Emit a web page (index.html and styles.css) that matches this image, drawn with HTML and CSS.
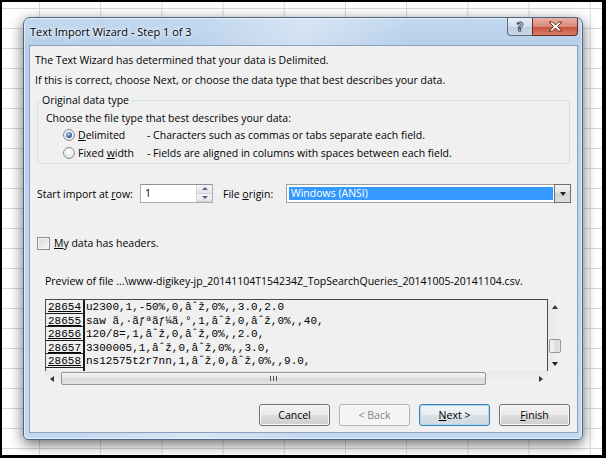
FILE: index.html
```html
<!DOCTYPE html>
<html lang="en">
<head>
    <meta charset="UTF-8">
    <title>Text Import Wizard - Step 1 of 3</title>
    <link rel="stylesheet" href="styles.css">
</head>
<body>
    <div class="screen">
        <div class="window">
            <div class="titlebar">
                <span class="title">Text Import Wizard - Step 1 of 3</span>
                <div class="caption">
                    <span class="cap help"><span class="qmark">?</span></span>
                    <span class="cap close">
                        <svg width="15" height="11" viewBox="0 0 15 11"><path d="M1 1 L4.5 1 L7.5 4 L10.5 1 L14 1 L9.5 5.5 L14 10 L10.5 10 L7.5 7 L4.5 10 L1 10 L5.5 5.5 Z" fill="#fff" stroke="#5a1e16" stroke-width="0.9" stroke-linejoin="round"/></svg>
                    </span>
                </div>
            </div>

            <div class="client">
                <p class="intro">The Text Wizard has determined that your data is Delimited.</p>
                <p class="intro">If this is correct, choose Next, or choose the data type that best describes your data.</p>

                <fieldset class="group">
                    <legend>Original data type</legend>
                    <p class="choose">Choose the file type that best describes your data:</p>
                    <div class="radio-row">
                        <span class="radio checked"></span>
                        <span class="rlabel"><u>D</u>elimited</span>
                        <span>- Characters such as commas or tabs separate each field.</span>
                    </div>
                    <div class="radio-row">
                        <span class="radio"></span>
                        <span class="rlabel">Fixed <u>w</u>idth</span>
                        <span>- Fields are aligned in columns with spaces between each field.</span>
                    </div>
                </fieldset>

                <div class="import-row">
                    <span class="row-label">Start import at <u>r</u>ow:</span>
                    <div class="spin">
                        <span class="spin-value">1</span>
                        <div class="spin-btns">
                            <span class="spin-btn"><i class="tri up"></i></span>
                            <span class="spin-btn"><i class="tri down"></i></span>
                        </div>
                    </div>
                    <span class="origin-label">File <u>o</u>rigin:</span>
                    <div class="combo">
                        <span class="combo-sel">Windows (ANSI)</span>
                        <span class="combo-drop"><i class="tri down dark"></i></span>
                    </div>
                </div>

                <div class="check-row">
                    <span class="checkbox"></span>
                    <span><u>M</u>y data has headers.</span>
                </div>

                <p class="preview-label">Preview of file ...\www-digikey-jp_20141104T154234Z_TopSearchQueries_20141005-20141104.csv.</p>

                <div class="preview">
                    <div class="list">
                        <div class="row"><span class="num">28654</span><span class="data">u2300,1,-50%,0,âˆž,0%,,3.0,2.0</span></div>
                        <div class="row"><span class="num">28655</span><span class="data">saw ã‚·ãƒªãƒ¼ã‚°,1,âˆž,0,âˆž,0%,,40,</span></div>
                        <div class="row"><span class="num">28656</span><span class="data">120/8=,1,âˆž,0,âˆž,0%,,2.0,</span></div>
                        <div class="row"><span class="num">28657</span><span class="data">3300005,1,âˆž,0,âˆž,0%,,3.0,</span></div>
                        <div class="row"><span class="num">28658</span><span class="data">ns12575t2r7nn,1,âˆž,0,âˆž,0%,,9.0,</span></div>
                        <div class="row"><span class="num"></span><span class="data"></span></div>
                    </div>
                    <div class="vscroll">
                        <span class="sarrow"><i class="tri up dark"></i></span>
                        <span class="vthumb"></span>
                        <span class="sarrow last"><i class="tri down dark"></i></span>
                    </div>
                    <div class="hscroll">
                        <span class="sarrow"><i class="tri left dark"></i></span>
                        <span class="hthumb"><span class="grip"></span></span>
                        <span class="sarrow"><i class="tri right dark"></i></span>
                    </div>
                    <div class="corner"></div>
                </div>

                <div class="buttons">
                    <button class="btn">Cancel</button>
                    <button class="btn disabled">&lt; Back</button>
                    <button class="btn default"><u>N</u>ext &gt;</button>
                    <button class="btn"><u>F</u>inish</button>
                </div>
            </div>
        </div>
    </div>
</body>
</html>
```

FILE: styles.css
```css
body {
    margin: 0;
    background: #000;
    font-family: "Open Sans", "Noto Sans", sans-serif;
    font-size: 10.5px;
    color: #000;
}
.screen {
    position: relative;
    width: 600px;
    height: 453px;
    margin: 2px 4px 3px 2px;
    overflow: hidden;
    background-color: #fff;
    background-image:
        linear-gradient(to right, #d8d8d8 1px, transparent 1px),
        linear-gradient(to bottom, #d8d8d8 1px, transparent 1px);
    background-size: 61.2px 100%, 100% 20px;
    background-position: 37px 0, 0 6px;
}

/* dialog window */
.window {
    position: absolute;
    left: 21px;
    top: 15px;
    width: 558px;
    height: 421px;
    border: 1px solid #4d6684;
    border-radius: 7px 7px 5px 5px;
    background:
        linear-gradient(105deg, rgba(255,255,255,0) 25%, rgba(255,255,255,.35) 42%, rgba(255,255,255,0) 58%),
        linear-gradient(#c3d8ef, #b7cfea 28px, #c4d9ef);
    box-shadow: inset 0 0 0 1px rgba(255,255,255,.55), 0 4px 14px rgba(0,0,0,.6);
    display: flex;
    flex-direction: column;
}
.titlebar {
    height: 27px;
    display: flex;
    align-items: flex-start;
}
.title {
    padding: 6px 0 0 6px;
    line-height: 16px;
    font-size: 11px;
    text-shadow: 0 0 6px #fff, 0 0 3px #fff;
}
.caption {
    margin-left: auto;
    margin-right: 4px;
    display: flex;
}
.cap {
    height: 18px;
    box-sizing: border-box;
    border: 1px solid #5b6c84;
    border-top: none;
    display: flex;
    align-items: center;
    justify-content: center;
}
.help {
    width: 25px;
    border-right: none;
    border-radius: 0 0 0 4px;
    background: linear-gradient(#e6eef8, #d2deec 50%, #bccbde 50%, #cad8e9);
}
.qmark {
    font-family: "DejaVu Sans", sans-serif;
    font-weight: bold;
    font-size: 12px;
    line-height: 12px;
    color: #fff;
    -webkit-text-stroke: 1px #3d4c60;
}
.close {
    width: 46px;
    border-color: #6b2a22;
    border-radius: 0 0 4px 0;
    background: linear-gradient(#eab0a2, #d98a79 50%, #c64c38 50%, #d8806a);
}

.client {
    flex: 1;
    margin: 0 4px 6px 5px;
    border: 1px solid #8aa2bf;
    background: #f0f0f0;
    padding-top: 4px;
    display: flex;
    flex-direction: column;
}
.intro {
    margin: 0;
    padding-left: 5px;
    line-height: 20px;
}

/* group box */
.group {
    margin: 2px 7px 0;
    padding: 3px 8px 1px;
    border: 1px solid #d5dfe5;
    border-radius: 3px;
    min-width: 0;
}
.group legend {
    margin-left: -6px;
    padding: 0 2px;
    line-height: 16px;
}
.choose {
    margin: 0;
    line-height: 15px;
}
.radio-row {
    display: flex;
    align-items: center;
    height: 18px;
    padding-left: 17px;
}
.radio {
    width: 12px;
    height: 12px;
    box-sizing: border-box;
    border: 1px solid #8b8b8b;
    border-radius: 50%;
    background: radial-gradient(circle at 50% 35%, #fff, #dcdcdc);
    margin-right: 3px;
    display: flex;
    align-items: center;
    justify-content: center;
}
.radio.checked::after {
    content: "";
    width: 6px;
    height: 6px;
    border-radius: 50%;
    background: radial-gradient(circle at 40% 35%, #b6d8f5, #3a6ea5 55%, #132f52);
}
.rlabel {
    width: 69px;
}

/* import row */
.import-row {
    display: flex;
    align-items: center;
    margin-top: 20px;
    padding-left: 7px;
    height: 19px;
}
.row-label {
    width: 103px;
}
.spin {
    width: 73px;
    height: 19px;
    box-sizing: border-box;
    border: 1px solid #abadb3;
    border-top-color: #8e9199;
    background: #fff;
    display: flex;
}
.spin-value {
    flex: 1;
    padding-left: 4px;
    line-height: 17px;
}
.spin-btns {
    width: 15px;
    display: flex;
    flex-direction: column;
    border-left: 1px solid #d6d6d6;
}
.spin-btn {
    flex: 1;
    display: flex;
    align-items: center;
    justify-content: center;
    background: linear-gradient(#f6f6f6, #e4e4e4);
    border-bottom: 1px solid #d0d0d0;
}
.origin-label {
    margin-left: 10px;
    width: 63px;
}
.combo {
    width: 285px;
    height: 19px;
    box-sizing: border-box;
    border: 1px solid #a0a0a0;
    background: #fff;
    display: flex;
}
.combo-sel {
    flex: 1;
    margin: 2px 1px 2px 2px;
    padding-left: 2px;
    background: #3399ff;
    color: #fff;
    line-height: 13px;
}
.combo-drop {
    width: 15px;
    margin: -1px -1px -1px 0;
    border: 1px solid #6f6f6f;
    background: linear-gradient(#f4f4f4, #e2e2e2 50%, #d4d4d4 50%, #dcdcdc);
    display: flex;
    align-items: center;
    justify-content: center;
}

/* small triangles */
.tri {
    width: 0;
    height: 0;
    border: 3px solid transparent;
}
.tri.up { border-bottom: 3px solid #4f6685; border-top: none; }
.tri.down { border-top: 3px solid #4f6685; border-bottom: none; }
.tri.left { border-right: 3px solid #4f6685; border-left: none; }
.tri.right { border-left: 3px solid #4f6685; border-right: none; }
.tri.dark.up { border-bottom-color: #333; border-width: 0 3.5px 4px; }
.tri.dark.down { border-top-color: #222; border-width: 4px 3.5px 0; }
.tri.dark.left { border-right-color: #333; border-width: 3.5px 4px 3.5px 0; }
.tri.dark.right { border-left-color: #333; border-width: 3.5px 0 3.5px 4px; }

/* checkbox */
.check-row {
    display: flex;
    align-items: center;
    margin-top: 32px;
    padding-left: 7px;
    height: 16px;
}
.checkbox {
    width: 13px;
    height: 13px;
    box-sizing: border-box;
    border: 1px solid #8e8f8f;
    background: linear-gradient(135deg, #d4d4d4, #f7f7f7);
    box-shadow: inset 0 0 0 1px #f4f4f4;
    margin-right: 4px;
}

.preview-label {
    margin: 22px 0 0;
    padding-left: 15px;
    line-height: 16px;
}

/* preview */
.preview {
    margin: 10px 0 0 15px;
    width: 517px;
    display: grid;
    grid-template-columns: 503px 14px;
    grid-template-rows: 72px 15px;
}
.list {
    border: 1px solid #4a4a4a;
    border-bottom: none;
    background: #f0f0f0;
    overflow: hidden;
    font-family: "Liberation Mono", monospace;
    font-size: 11px;
}
.row {
    display: flex;
    height: 13.6px;
    line-height: 15px;
}
.num {
    width: 39px;
    flex: none;
    box-sizing: border-box;
    padding-left: 2px;
    border-right: 2px solid #1a1a1a;
    border-bottom: 1px solid #1a1a1a;
    text-decoration: underline;
    overflow: hidden;
}
.data {
    padding-left: 1px;
    white-space: pre;
}
.vscroll {
    background: linear-gradient(to right, #e9e9e9, #f2f2f2);
    display: flex;
    flex-direction: column;
    align-items: center;
}
.sarrow {
    width: 14px;
    height: 15px;
    flex: none;
    display: flex;
    align-items: center;
    justify-content: center;
}
.vscroll .sarrow.last {
    margin-top: auto;
}
.vthumb {
    width: 12px;
    height: 14px;
    margin-top: 25px;
    box-sizing: border-box;
    border: 1px solid #979797;
    border-radius: 2px;
    background: linear-gradient(to right, #f4f4f4, #e6e6e6 50%, #d9d9d9 50%, #e4e4e4);
}
.hscroll {
    background: linear-gradient(#e9e9e9, #f2f2f2);
    display: flex;
    align-items: center;
}
.hthumb {
    width: 425px;
    height: 13px;
    margin: 0 auto 0 2px;
    box-sizing: border-box;
    border: 1px solid #979797;
    border-radius: 2px;
    background: linear-gradient(#f4f4f4, #e6e6e6 50%, #d9d9d9 50%, #e4e4e4);
    display: flex;
    align-items: center;
    justify-content: center;
}
.grip {
    width: 5px;
    height: 5px;
    border-left: 1px solid #555;
    border-right: 1px solid #555;
}
.grip::after {
    content: "";
    display: block;
    width: 1px;
    height: 5px;
    margin-left: 2px;
    background: #555;
}
.corner {
    background: #f0f0f0;
}

/* buttons */
.buttons {
    display: flex;
    justify-content: flex-end;
    gap: 9px;
    margin-top: 18px;
    padding-right: 7px;
}
.btn {
    width: 71px;
    height: 22px;
    border: 1px solid #707070;
    border-radius: 3px;
    background: linear-gradient(#f2f2f2, #ebebeb 50%, #dddddd 50%, #cfcfcf);
    box-shadow: inset 0 0 0 1px #fafafa;
    font-family: inherit;
    font-size: 10.5px;
    color: #000;
    padding: 0;
}
.btn.disabled {
    border-color: #adb2b5;
    background: #f4f4f4;
    color: #838383;
}
.btn.default {
    border-color: #3c7fb1;
    box-shadow: inset 0 0 0 1px #a9dbf6;
    background: linear-gradient(#f2f6f9, #e9eef2 50%, #dae2e8 50%, #cfd8df);
}
```
